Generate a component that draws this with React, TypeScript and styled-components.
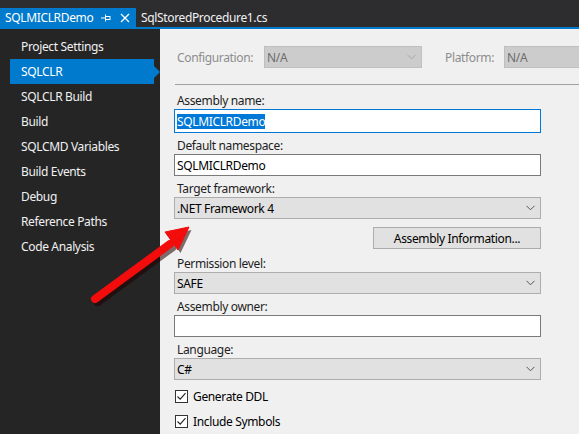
import React from "react";
import styled, { createGlobalStyle, css } from "styled-components";

const GlobalStyle = createGlobalStyle`
  html, body { margin: 0; padding: 0; background: #f0f0f0; }
  body { font-family: "Noto Sans", "Open Sans", sans-serif; font-size: 12px; letter-spacing: -0.35px; }
  * { box-sizing: border-box; }
`;

const Page = styled.div`
  position: relative;
  width: 579px;
  height: 434px;
  overflow: hidden;
  display: flex;
  flex-direction: column;
  background: #f0f0f0;
`;

const TabBar = styled.div`
  height: 27px;
  background: #2d2d30;
  display: flex;
  align-items: flex-end;
  flex-shrink: 0;
`;

const Tab = styled.div<{ $active?: boolean }>`
  height: 19px;
  display: flex;
  align-items: center;
  padding: 0 5px;
  color: #f1f1f1;
  white-space: nowrap;
  ${(p) =>
    p.$active &&
    css`
      background: #007acc;
      color: #ffffff;
      width: 136px;
    `}
`;

const TabTitle = styled.span`
  flex: 1;
`;

const TabIcon = styled.svg`
  display: block;
  flex-shrink: 0;
`;

const AccentLine = styled.div`
  height: 2px;
  background: #007acc;
  flex-shrink: 0;
`;

const Body = styled.div`
  flex: 1;
  display: flex;
  min-height: 0;
`;

const Sidebar = styled.nav`
  width: 160px;
  flex-shrink: 0;
  background: #252526;
  padding-top: 5px;
`;

const NavItem = styled.div<{ $selected?: boolean }>`
  position: relative;
  height: 25px;
  width: 144px;
  margin-left: 10px;
  padding-left: 11px;
  display: flex;
  align-items: center;
  color: #f1f1f1;
  ${(p) =>
    p.$selected &&
    css`
      background: #007acc;
      color: #ffffff;
      &::after {
        content: "";
        position: absolute;
        left: 100%;
        top: 50%;
        margin-top: -6px;
        border-left: 6px solid #007acc;
        border-top: 6px solid transparent;
        border-bottom: 6px solid transparent;
      }
    `}
`;

const Content = styled.main`
  flex: 1;
  padding: 17px 0 0 14px;
  overflow: hidden;
  color: #1e1e1e;
`;

const ConfigRow = styled.div`
  display: flex;
  align-items: center;
  height: 22px;
  white-space: nowrap;
`;

const ConfigLabel = styled.span<{ $width: number; $gap: number }>`
  width: ${(p) => p.$width}px;
  margin-left: ${(p) => p.$gap}px;
  color: #8d8d8d;
  flex-shrink: 0;
`;

const Separator = styled.div`
  height: 1px;
  margin: 16px 0 0 1px;
  background: #a0a0a0;
`;

const Form = styled.div`
  width: 367px;
  display: flex;
  flex-direction: column;
`;

const Label = styled.div<{ $mt?: number }>`
  margin-top: ${(p) => p.$mt ?? 4}px;
  line-height: 17px;
  padding-left: 3px;
  color: #1e1e1e;
`;

const TextBox = styled.div<{ $focused?: boolean }>`
  height: ${(p) => (p.$focused ? 24 : 22)}px;
  background: #ffffff;
  border: 1px solid ${(p) => (p.$focused ? "#0078d7" : "#7a7a7a")};
  padding-left: 2px;
  display: flex;
  align-items: center;
  color: #000000;
`;

const Selection = styled.span`
  background: #0078d7;
  color: #ffffff;
  line-height: 15px;
`;

const Combo = styled.div<{ $disabled?: boolean; $width?: number }>`
  height: 22px;
  ${(p) => (p.$width ? `width: ${p.$width}px; flex-shrink: 0;` : "")}
  display: flex;
  align-items: center;
  justify-content: space-between;
  padding: 0 5px 0 2px;
  background: ${(p) => (p.$disabled ? "#cccccc" : "#e1e1e1")};
  border: 1px solid ${(p) => (p.$disabled ? "#bfbfbf" : "#adadad")};
  color: ${(p) => (p.$disabled ? "#6d6d6d" : "#000000")};
`;

const Chevron = styled.svg`
  display: block;
  flex-shrink: 0;
`;

const Button = styled.div`
  margin: 8px 0 0 199px;
  width: 168px;
  height: 22px;
  display: flex;
  align-items: center;
  justify-content: center;
  background: #e1e1e1;
  border: 1px solid #adadad;
  color: #000000;
`;

const CheckRow = styled.div<{ $mt?: number }>`
  height: 25px;
  margin-top: ${(p) => p.$mt ?? 0}px;
  display: flex;
  align-items: center;
  gap: 5px;
  padding-left: 1px;
  color: #000000;
`;

const CheckBox = styled.div`
  width: 13px;
  height: 13px;
  border: 1px solid #333333;
  background: #ffffff;
  display: flex;
  align-items: center;
  justify-content: center;
`;

const ArrowOverlay = styled.svg`
  position: absolute;
  left: 0;
  top: 0;
  pointer-events: none;
`;

const ChevronIcon = ({ color }: { color: string }) => (
  <Chevron width="9" height="6" viewBox="0 0 9 6">
    <polyline points="0.5,0.8 4.5,4.8 8.5,0.8" fill="none" stroke={color} strokeWidth="1" />
  </Chevron>
);

const navItems = [
  "Project Settings",
  "SQLCLR",
  "SQLCLR Build",
  "Build",
  "SQLCMD Variables",
  "Build Events",
  "Debug",
  "Reference Paths",
  "Code Analysis",
];

const Check = () => (
  <svg width="11" height="11" viewBox="0 0 11 11">
    <polyline points="1.5,5.5 4.2,8.2 9.5,2.2" fill="none" stroke="#222" strokeWidth="1.1" />
  </svg>
);

export default function App() {
  return (
    <>
      <GlobalStyle />
      <Page>
        <TabBar>
          <Tab $active>
            <TabTitle>SQLMICLRDemo</TabTitle>
            <TabIcon width="10" height="8" viewBox="0 0 10 8" style={{ marginRight: 9 }}>
              <line x1="0" y1="4" x2="4" y2="4" stroke="#fff" strokeWidth="1" />
              <line x1="4.5" y1="0.5" x2="4.5" y2="7.5" stroke="#fff" strokeWidth="1" />
              <rect x="4.5" y="2.5" width="4.5" height="3" fill="none" stroke="#fff" strokeWidth="1" />
            </TabIcon>
            <TabIcon width="10" height="10" viewBox="0 0 10 10" style={{ marginRight: 1 }}>
              <path d="M1 1 L9 9 M9 1 L1 9" stroke="#fff" strokeWidth="1.3" />
            </TabIcon>
          </Tab>
          <Tab>SqlStoredProcedure1.cs</Tab>
        </TabBar>
        <AccentLine />
        <Body>
          <Sidebar>
            {navItems.map((item) => (
              <NavItem key={item} $selected={item === "SQLCLR"}>
                {item}
              </NavItem>
            ))}
          </Sidebar>
          <Content>
            <ConfigRow>
              <ConfigLabel $width={87} $gap={3}>Configuration:</ConfigLabel>
              <Combo $disabled $width={158}>
                <span>N/A</span>
                <ChevronIcon color="#a8a8a8" />
              </Combo>
              <ConfigLabel $width={59} $gap={23}>Platform:</ConfigLabel>
              <Combo $disabled $width={100}>
                <span>N/A</span>
              </Combo>
            </ConfigRow>
            <Separator />
            <Form>
              <Label $mt={7}>Assembly name:</Label>
              <TextBox $focused>
                <Selection>SQLMICLRDemo</Selection>
              </TextBox>
              <Label>Default namespace:</Label>
              <TextBox>SQLMICLRDemo</TextBox>
              <Label>Target framework:</Label>
              <Combo>
                <span>.NET Framework 4</span>
                <ChevronIcon color="#555" />
              </Combo>
              <Button>Assembly Information...</Button>
              <Label $mt={6}>Permission level:</Label>
              <Combo>
                <span>SAFE</span>
                <ChevronIcon color="#555" />
              </Combo>
              <Label>Assembly owner:</Label>
              <TextBox />
              <Label>Language:</Label>
              <Combo>
                <span>C#</span>
                <ChevronIcon color="#555" />
              </Combo>
              <CheckRow $mt={4}>
                <CheckBox>
                  <Check />
                </CheckBox>
                Generate DDL
              </CheckRow>
              <CheckRow>
                <CheckBox>
                  <Check />
                </CheckBox>
                Include Symbols
              </CheckRow>
            </Form>
          </Content>
        </Body>
        <ArrowOverlay width="579" height="434" viewBox="0 0 579 434">
          <g transform="translate(2.5,3)" opacity="0.55">
            <line x1="95" y1="299" x2="170" y2="244" stroke="#200000" strokeWidth="8.5" strokeLinecap="round" />
            <polygon points="189,227 165,232 178,250" fill="#200000" />
          </g>
          <line x1="95" y1="299" x2="170" y2="244" stroke="#f20c0c" strokeWidth="8" strokeLinecap="round" />
          <polygon points="189,227 165,232 178,250" fill="#f20c0c" stroke="#f20c0c" strokeWidth="1" strokeLinejoin="round" />
        </ArrowOverlay>
      </Page>
    </>
  );
}
